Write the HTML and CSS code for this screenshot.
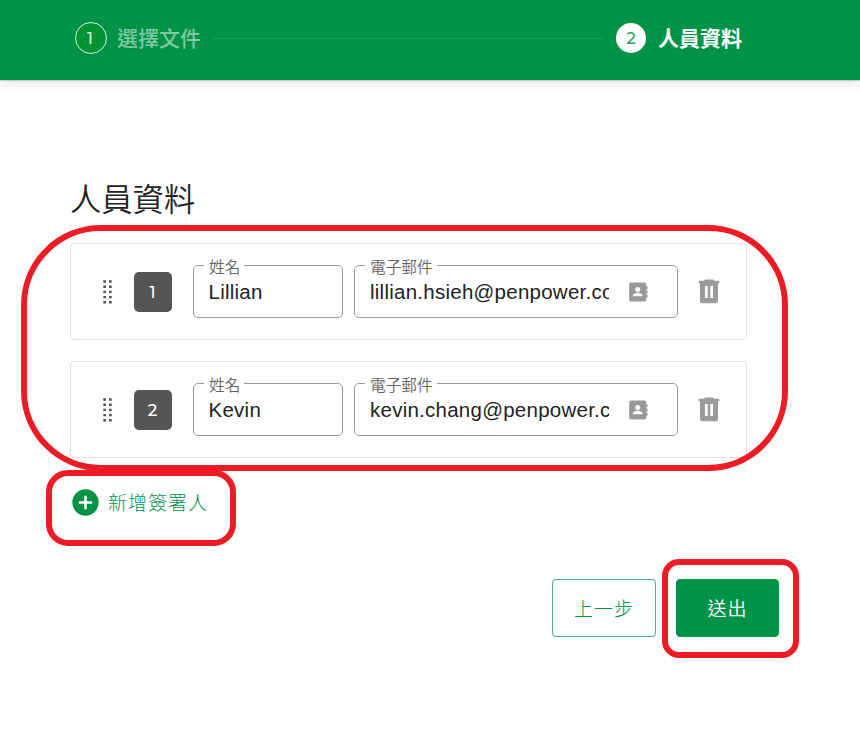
FILE: index.html
```html
<!DOCTYPE html>
<html lang="zh-Hant">
<head>
<meta charset="utf-8">
<title>人員資料</title>
<link rel="stylesheet" href="styles.css">
</head>
<body>
<svg class="sprite" aria-hidden="true">
  <symbol id="grip" viewBox="0 0 10 26">
    <path d="M.3 1.300h2.700v2.400H.3zM6 1.300h2.700v2.400H6zM.3 6.500h2.700v2.400H.3zM6 6.500h2.700v2.400H6zM.3 11.700h2.700v2.400H.3zM6 11.700h2.700v2.400H6zM.3 16.900h2.700v2.400H.3zM6 16.900h2.700v2.400H6zM.3 22.100h2.700v2.400H.3zM6 22.100h2.700v2.400H6z"/>
  </symbol>
  <symbol id="contact" viewBox="0 0 19 20">
    <path fill-rule="evenodd" d="M2 .5h13.500a1.800 1.800 0 0 1 1.700 1.800v2h1.300v3h-1.300v1.200h1.300v3h-1.300v1.200h1.300v3h-1.300v2a1.800 1.800 0 0 1-1.700 1.800H2A1.800 1.800 0 0 1 .2 17.700V2.300A1.800 1.800 0 0 1 2 .5zM8.700 5a2.500 2.500 0 1 0 0 5 2.500 2.500 0 0 0 0-5zM3.900 14.300h9.600v-.9c0-1.700-3-2.700-4.800-2.700s-4.800 1-4.800 2.700z"/>
  </symbol>
  <symbol id="trash" viewBox="0 0 22 25">
    <path fill-rule="evenodd" d="M7 .5h8l1 1.200h5.300v2.500H.7V1.700H6zM2 5h18v17.300a2 2 0 0 1-2 2H4a2 2 0 0 1-2-2zM7 7v12h2.700V7zM12.300 7v12H15V7z"/>
    <path d="M2 4h18v2H2z"/>
  </symbol>
</svg>

<header class="topbar">
  <span class="step-num">1</span>
  <span class="step-label">選擇文件</span>
  <span class="step-line"></span>
  <span class="step-num step-num-active">2</span>
  <span class="step-label step-label-active">人員資料</span>
</header>

<main class="content">
  <h1 class="title">人員資料</h1>
  <section class="signers">
    <div class="card">
      <svg class="grip"><use href="#grip"/></svg>
      <span class="badge">1</span>
      <div class="field field-name">
        <span class="field-label">姓名</span>
        <span class="value">Lillian</span>
      </div>
      <div class="field field-mail">
        <span class="field-label">電子郵件</span>
        <span class="value">lillian.hsieh@penpower.com</span>
        <svg class="contact"><use href="#contact"/></svg>
      </div>
      <svg class="trash"><use href="#trash"/></svg>
    </div>
    <div class="card">
      <svg class="grip"><use href="#grip"/></svg>
      <span class="badge">2</span>
      <div class="field field-name">
        <span class="field-label">姓名</span>
        <span class="value">Kevin</span>
      </div>
      <div class="field field-mail">
        <span class="field-label">電子郵件</span>
        <span class="value">kevin.chang@penpower.com</span>
        <svg class="contact"><use href="#contact"/></svg>
      </div>
      <svg class="trash"><use href="#trash"/></svg>
    </div>
  </section>
  <div class="add">
    <svg class="plus" viewBox="0 0 27 27"><circle cx="13.500" cy="13.500" r="13.200" fill="#009348"/><path d="M13.500 6.800v13.400M6.800 13.500h13.400" stroke="#fff" stroke-width="2.600"/></svg>
    <span class="add-text">新增簽署人</span>
  </div>
  <div class="actions">
    <button class="btn">上一步</button>
    <button class="btn btn-primary">送出</button>
  </div>
</main>

<div class="mark mark-list"></div>
<div class="mark mark-add"></div>
<div class="mark mark-send"></div>
</body>
</html>
```

FILE: styles.css
```css
* { box-sizing: border-box; }

body {
  position: relative;
  margin: 0;
  height: 733px;
  overflow: hidden;
  background: #fff;
  color: #222;
  font-family: "Liberation Sans", "Noto Sans CJK TC", sans-serif;
}

svg { display: block; flex: none; }
.sprite { position: absolute; width: 0; height: 0; }

.topbar {
  display: flex;
  align-items: center;
  height: 80px;
  padding: 0 118px 4px 75px;
  background: #009348;
  box-shadow: 0 1px 1px rgba(0, 0, 0, .15), 0 3px 12px rgba(0, 0, 0, .12);
}

.step-num {
  display: flex;
  flex: none;
  align-items: center;
  justify-content: center;
  width: 32px;
  height: 32px;
  padding-right: 2px;
  border: 1.500px solid #d5eedf;
  border-radius: 50%;
  background: #009435;
  color: #d9f0e2;
  font: 500 16px Montserrat, "Noto Sans", sans-serif;
}

.step-num-active {
  width: 30px;
  height: 30px;
  padding-right: 0;
  border: 0;
  background: #fff;
  color: #27a263;
}

.step-label {
  flex: none;
  padding-top: 1px;
  margin-left: 10px;
  color: #7fc9a3;
  font-size: 21px;
  font-weight: 500;
  line-height: 30px;
}

.step-label-active {
  margin-left: 12px;
  color: #fff;
  font-weight: 700;
}

.step-line {
  flex: 1;
  height: 1px;
  margin: 1px 12px 0 11px;
  background: #1d9d5d;
}

.content { padding: 98px 0 0 70px; }

.title {
  height: 48px;
  margin: 0 0 17px;
  font-size: 31.300px;
  font-weight: 350;
  line-height: 46px;
}

.signers {
  display: flex;
  flex-direction: column;
  gap: 21px;
  width: 677px;
}

.card {
  display: flex;
  align-items: center;
  height: 97px;
  padding-left: 32px;
  border: 1px solid #e0e0e0;
  border-radius: 4px;
}

.grip { width: 10px; height: 26px; fill: #555; }

.badge {
  display: flex;
  align-items: center;
  justify-content: center;
  width: 38px;
  height: 40px;
  padding-right: 1px;
  margin: 0 21px;
  border-radius: 5px;
  background: #555;
  color: #fff;
  font: 500 16.500px Montserrat, "Noto Sans", sans-serif;
}

.field {
  position: relative;
  display: flex;
  align-items: center;
  height: 53px;
  padding: 0 15px 0 14.500px;
  border: 1px solid #999;
  border-radius: 5px;
}

.field-name { width: 150px; }
.field-mail { width: 324px; padding-left: 15px; margin: 0 20px 0 11px; }

.field-label {
  position: absolute;
  top: -9px;
  left: 10px;
  padding: 0 4px 0 5px;
  background: #fff;
  color: #666;
  font-size: 15.700px;
  font-weight: 350;
  line-height: 22px;
}

.value {
  width: 239px;
  overflow: hidden;
  font-size: 20.500px;
  letter-spacing: .25px;
  line-height: 30px;
  white-space: nowrap;
}

.contact { width: 19px; height: 20px; margin-left: 20px; fill: #999; }
.trash { width: 22px; height: 25px; fill: #9b9b9b; }

.add {
  display: flex;
  align-items: center;
  gap: 9px;
  height: 30px;
  margin: 29px 0 0 2px;
  color: #009348;
  font-size: 19px;
  font-weight: 300;
  letter-spacing: 1px;
}

.add-text { padding-bottom: 1px; }
.plus { width: 27px; height: 27px; }

.actions {
  display: flex;
  justify-content: flex-end;
  gap: 20px;
  margin: 62px 81px 0 0;
}

.btn {
  width: 104px;
  height: 58px;
  padding: 0 0 2px;
  border: 1px solid #4bb37f;
  border-radius: 4px;
  background: #fff;
  color: #009348;
  font: 300 19px "Noto Sans CJK TC", sans-serif;
  letter-spacing: 1px;
}

.btn-primary {
  width: 103px;
  border-color: #009348;
  background: #009348;
  color: #fff;
  font-weight: 350;
}

.mark {
  position: absolute;
  border: 6px solid #ed1c24;
  pointer-events: none;
}

.mark-list { left: 21px; top: 225px; width: 767px; height: 246px; border-radius: 80px; }
.mark-add { left: 46px; top: 470px; width: 190px; height: 76px; border-radius: 22px; }
.mark-send { left: 662px; top: 559px; width: 137px; height: 99px; border-radius: 17px; }
```
